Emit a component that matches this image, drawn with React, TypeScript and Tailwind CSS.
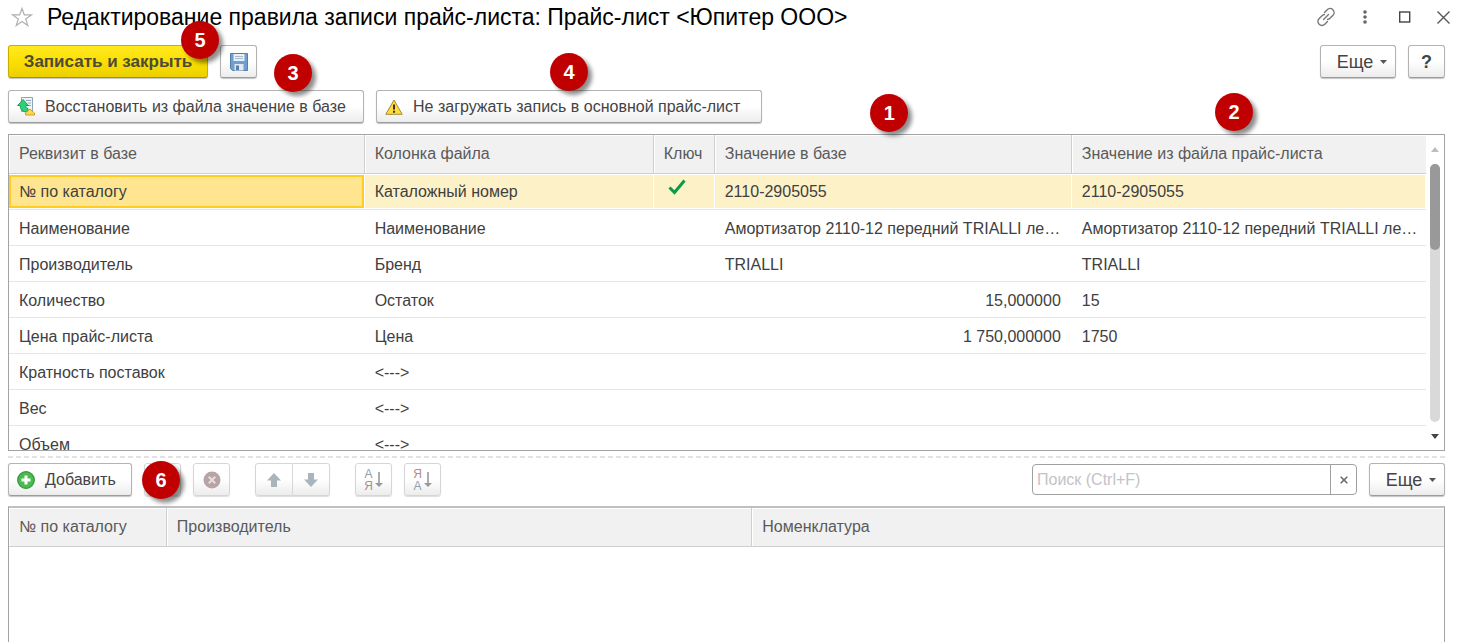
import { useState } from "react"
import type { ReactNode } from "react"

interface Rule {
  name: string
  column: string
  isKey?: boolean
  base?: string
  numeric?: boolean
  file?: string
}

const RULES: Rule[] = [
  { name: "№ по каталогу", column: "Каталожный номер", isKey: true, base: "2110-2905055", file: "2110-2905055" },
  { name: "Наименование", column: "Наименование", base: "Амортизатор 2110-12 передний TRIALLI ле…", file: "Амортизатор 2110-12 передний TRIALLI ле…" },
  { name: "Производитель", column: "Бренд", base: "TRIALLI", file: "TRIALLI" },
  { name: "Количество", column: "Остаток", base: "15,000000", numeric: true, file: "15" },
  { name: "Цена прайс-листа", column: "Цена", base: "1 750,000000", numeric: true, file: "1750" },
  { name: "Кратность поставок", column: "<--->" },
  { name: "Вес", column: "<--->" },
  { name: "Объем", column: "<--->" },
]

const BTN = "flex shrink-0 items-center h-[33px] border rounded-[3px] bg-linear-to-b from-white from-50% to-[#ececec] whitespace-nowrap"
const BTN_ON = BTN + " border-[#b3b3b3] border-b-[#9c9c9c] shadow-[0_1px_1px_#c4c4c4] text-[#444]"
const BTN_OFF = BTN + " justify-center border-[#d6d6d6] shadow-[0_1px_1px_#dedede]"
const TH = "h-[39px] p-0 px-[10px] text-left font-normal text-[#5a5a5a] border-r border-b border-[#cfcfcf] last:border-r-0 shadow-[inset_1px_1px_0_#fff]"

export default function App() {
  const [search, setSearch] = useState("")
  const [selected, setSelected] = useState(0)

  return (
    <div className="flex flex-col h-screen overflow-hidden bg-white pl-2 pr-[18px] text-base leading-5 text-[#404040] font-['Liberation_Sans',Arial,sans-serif]">
      <header className="flex items-center h-[34px] shrink-0">
        <button aria-label="В избранное" className="mr-[14px] ml-[3px]">
          <StarIcon />
        </button>
        <h1 className="flex-1 text-[23px] leading-[34px] text-black whitespace-nowrap">
          Редактирование правила записи прайс-листа: Прайс-лист &lt;Юпитер ООО&gt;
        </h1>
        <div className="flex items-center -mr-[6px] text-[#666]">
          <button aria-label="Ссылка" className="mr-5"><LinkIcon /></button>
          <button aria-label="Меню" className="mr-6">
            <svg width="18" height="18" viewBox="0 0 18 18" fill="currentColor">
              <circle cx="9" cy="4" r="1.8" /><circle cx="9" cy="9" r="1.8" /><circle cx="9" cy="14" r="1.8" />
            </svg>
          </button>
          <button aria-label="Развернуть" className="mr-6">
            <svg width="14" height="14" viewBox="0 0 14 14" fill="none" stroke="#444" strokeWidth="1.4">
              <rect x="1.7" y="2" width="10" height="10" />
            </svg>
          </button>
          <button aria-label="Закрыть">
            <svg width="15" height="15" viewBox="0 0 15 15" fill="none" stroke="#555" strokeWidth="1.4">
              <path d="M1.5 1.5l12 12M13.5 1.5l-12 12" />
            </svg>
          </button>
        </div>
      </header>

      <div className="flex items-start shrink-0 mt-[11px] gap-3">
        <div className="relative">
          <button className="h-[33px] w-[200px] rounded-[3px] border border-[#c9ae00] border-b-[#a89200] bg-linear-to-b from-[#ffe91f] via-[#fbdf00] to-[#ecd000] font-bold text-[17px] text-[#4d4a3a] shadow-[0_1px_1px_#c4c4c4] whitespace-nowrap">
            Записать и закрыть
          </button>
          <Badge n={5} className="-top-6 -right-[11px]" />
        </div>
        <button aria-label="Записать" className={BTN_ON + " w-[37px] justify-center"}><SaveIcon /></button>
        <div className="flex-1" />
        <button className={BTN_ON + " w-[76px] justify-center gap-[7px] pl-2 text-lg"}>Еще <Caret /></button>
        <button aria-label="Справка" className={BTN_ON + " w-[37px] justify-center font-bold text-lg text-[#333]"}>?</button>
      </div>

      <div className="flex shrink-0 mt-3 gap-3">
        <div className="relative">
          <button className={BTN_ON + " w-[356px] pl-2 gap-[10px]"}>
            <RestoreIcon />
            <span>Восстановить из файла значение в базе</span>
          </button>
          <Badge n={3} className="-top-9 right-[52px]" />
        </div>
        <div className="relative">
          <button className={BTN_ON + " w-[386px] pl-2 gap-[10px]"}>
            <WarningIcon />
            <span>Не загружать запись в основной прайс-лист</span>
          </button>
          <Badge n={4} className="-top-[37px] left-[174px]" />
        </div>
      </div>

      <div className="relative shrink-0 mt-[11px]">
        <div className="flex h-[317px] border border-[#a3a3a3] overflow-hidden">
          <div className="flex-1 min-w-0">
            <table className="w-full table-fixed border-separate border-spacing-0">
              <colgroup>
                <col className="w-[25.1%]" />
                <col className="w-[20.4%]" />
                <col className="w-[61px]" />
                <col className="w-[25.2%]" />
                <col />
              </colgroup>
              <thead className="bg-[#f1f1f1]">
                <tr>
                  <th className={TH}>Реквизит в базе</th>
                  <th className={TH}>Колонка файла</th>
                  <th className={TH}>Ключ</th>
                  <th className={TH}>Значение в базе</th>
                  <th className={TH}>Значение из файла прайс-листа</th>
                </tr>
              </thead>
              <tbody>
                {RULES.map((r, i) => {
                  const on = i === selected
                  return (
                    <tr key={r.name} onClick={() => setSelected(i)}>
                      <Cell on={on} focus={on}>{r.name}</Cell>
                      <Cell on={on}>{r.column}</Cell>
                      <Cell on={on}>
                        {r.isKey && (
                          <svg className="mt-1 ml-1" width="18" height="16" viewBox="0 0 18 16" fill="none" stroke="#0a9a4a" strokeWidth="3">
                            <path d="M1.5 8.5l5 5L16.5 1.5" />
                          </svg>
                        )}
                      </Cell>
                      <Cell on={on} right={r.numeric}>{r.base}</Cell>
                      <Cell on={on}>{r.file}</Cell>
                    </tr>
                  )
                })}
              </tbody>
            </table>
          </div>
          <div className="flex flex-col items-center w-[18px] pt-3 pb-[11px]">
            <svg width="8" height="5" viewBox="0 0 8 5" fill="#bdbdbd"><path d="M0 5l4-5 4 5z" /></svg>
            <div className="flex-1 w-[10px] my-3 rounded-full bg-[#d9d9d9]">
              <div className="h-1/3 rounded-full bg-[#999]" />
            </div>
            <svg width="8" height="5" viewBox="0 0 8 5" fill="#444"><path d="M0 0l4 5 4-5z" /></svg>
          </div>
        </div>
        <Badge n={1} className="-top-10 left-[60%]" />
        <Badge n={2} className="-top-[41px] left-[84%]" />
      </div>

      <div className="shrink-0 h-[2px] mt-[5px] bg-[repeating-linear-gradient(90deg,#e2e2e2_0_5px,transparent_5px_8px)]" />

      <div className="flex shrink-0 mt-[5px]">
        <button className={BTN_ON + " w-[124px] pl-2 gap-[10px]"}>
          <svg width="18" height="18" viewBox="0 0 18 18">
            <circle cx="9" cy="9" r="8.3" fill="#4cba50" stroke="#2c9638" strokeWidth="1.2" />
            <path d="M9 4.5v9M4.5 9h9" stroke="#fff" strokeWidth="3" />
          </svg>
          <span>Добавить</span>
        </button>
        <div className="relative ml-3">
          <button aria-label="Изменить" disabled className={BTN_OFF + " w-[37px]"} />
          <Badge n={6} className="-top-[2px] -left-[2px]" />
        </div>
        <button aria-label="Удалить" disabled className={BTN_OFF + " w-[37px] ml-3"}>
          <svg width="18" height="18" viewBox="0 0 18 18">
            <circle cx="9" cy="9" r="8.5" fill="#b8a4a4" />
            <path d="M5.8 5.8l6.4 6.4M12.2 5.8l-6.4 6.4" stroke="#e8e0e0" strokeWidth="2" />
          </svg>
        </button>
        <div className="flex ml-[25px]">
          <button aria-label="Вверх" disabled className={BTN_OFF + " w-[38px] rounded-r-none"}><ArrowIcon /></button>
          <button aria-label="Вниз" disabled className={BTN_OFF + " w-[37px] rounded-l-none border-l-0"}><ArrowIcon down /></button>
        </div>
        <button aria-label="По возрастанию" disabled className={BTN_OFF + " w-[37px] ml-[25px]"}><SortIcon top="А" bottom="Я" /></button>
        <button aria-label="По убыванию" disabled className={BTN_OFF + " w-[37px] ml-3"}><SortIcon top="Я" bottom="А" /></button>
        <div className="flex-1" />
        <div className="flex w-[325px] h-[31px] mt-px border border-[#a0a0a0] rounded">
          <input
            aria-label="Поиск"
            value={search}
            onChange={(e) => setSearch(e.target.value)}
            placeholder="Поиск (Ctrl+F)"
            className="flex-1 min-w-0 pl-1 outline-none placeholder:text-[#c3c3c7]"
          />
          <button aria-label="Очистить" onClick={() => setSearch("")} className="flex items-center justify-center w-[26px] border-l border-[#a0a0a0]">
            <svg width="8" height="8" viewBox="0 0 8 8" stroke="#666" strokeWidth="1.5"><path d="M.7 .7l6.6 6.6M7.3 .7L.7 7.3" /></svg>
          </button>
        </div>
        <button className={BTN_ON + " w-[76px] ml-3 justify-center gap-[7px] pl-2 text-lg"}>Еще <Caret /></button>
      </div>

      <div className="flex-1 mt-[10px] border border-b-0 border-t-2 border-[#a3a3a3] border-t-[#c0c0c0]">
        <table className="w-full table-fixed border-separate border-spacing-0">
          <colgroup>
            <col className="w-[11%]" />
            <col className="w-[40.8%]" />
            <col />
          </colgroup>
          <thead className="bg-[#f1f1f1]">
            <tr>
              <th className={TH}>№ по каталогу</th>
              <th className={TH}>Производитель</th>
              <th className={TH}>Номенклатура</th>
            </tr>
          </thead>
        </table>
      </div>
    </div>
  )
}

function Cell(props: { on: boolean; focus?: boolean; right?: boolean; children?: ReactNode }) {
  let cls = "pl-[10px] leading-[33px] whitespace-nowrap overflow-hidden mr-px"
  cls += props.on ? " h-[33px] my-px" : " h-[35px] pt-[2px]"
  cls += props.right ? " pr-[10px] text-right" : " pr-1"
  if (props.focus) cls += " bg-[#ffe590] shadow-[inset_0_0_0_2px_#ffcc1f]"
  else if (props.on) cls += " bg-[#fdf1c8]"
  return (
    <td className="p-0 border-b border-[#e6e6e6]">
      <div className={cls}>{props.children}</div>
    </td>
  )
}

function Badge({ n, className }: { n: number; className: string }) {
  return (
    <span className={"absolute z-10 flex items-center justify-center size-[38px] rounded-full bg-[#c00000] text-white text-xl font-bold shadow-[4px_4px_4px_rgba(0,0,0,0.45)] pointer-events-none " + className}>
      {n}
    </span>
  )
}

function Caret() {
  return <svg width="7" height="4" viewBox="0 0 7 4" fill="#555"><path d="M0 0h7L3.5 4z" /></svg>
}

function StarIcon() {
  return (
    <svg width="22" height="20" viewBox="0 0 22 20" fill="none" stroke="#b0b0b0" strokeWidth="1.2">
      <path d="M11 1.5l2.3 6.3 7 .1-5.6 4 2.1 6.6L11 14.500l-5.800 4 2.100-6.600-5.600-4 7-.1z" />
    </svg>
  )
}

function LinkIcon() {
  return (
    <svg width="20" height="20" viewBox="0 0 20 20" fill="none" stroke="#777" strokeWidth="1.4" strokeLinecap="round">
      <path d="M8.5 5.5l2.700-2.700a3.900 3.900 0 0 1 5.800 5.500l-3 3a3.900 3.900 0 0 1-2.500 1.200" />
      <path d="M11.500 14.500l-2.700 2.700a3.900 3.900 0 0 1-5.800-5.500l3-3a3.900 3.900 0 0 1 2.500-1.200" />
      <path d="M7.500 12.500l5-5" />
    </svg>
  )
}

function SaveIcon() {
  return (
    <svg width="18" height="18" viewBox="0 0 18 18">
      <path d="M.5.5h17v17h-15l-2-2z" fill="#6f9fd0" stroke="#5580ad" />
      <rect x="3.5" y="1" width="11" height="7" fill="#e9f0f6" />
      <path d="M5 3.5h8M5 5.5h8" stroke="#a9bccd" />
      <rect x="4.5" y="11" width="9" height="6.5" fill="#e3e8ec" />
      <rect x="6" y="12.5" width="3" height="4.5" fill="#5580ad" />
    </svg>
  )
}

function RestoreIcon() {
  return (
    <svg width="18" height="19" viewBox="0 0 18 19">
      <path d="M4.5.5h11v14h-11z" fill="#f1f5f8" stroke="#8fa5b8" />
      <path d="M9 3.5h5M11 6h3M11 8.5h3" stroke="#8fa5b8" />
      <path d="M6 2.5L.6 8.5h2.600c0 4.500 2.800 6.800 7.800 6.500v-3.500C9.300 11 8.800 10 8.800 8.500h2.700z" fill="#2fd07a" stroke="#159650" strokeWidth=".9" />
      <path d="M13 12l4.500 4v2h-9v-2z" fill="#ffd84a" stroke="#c79a1c" strokeWidth=".9" />
    </svg>
  )
}

function WarningIcon() {
  return (
    <svg width="18" height="16" viewBox="0 0 18 16">
      <path d="M9 1l8.2 14.3H.8z" fill="#ffdc36" stroke="#a08a3c" strokeLinejoin="round" />
      <path d="M9 5.5v5M9 11.8v2" stroke="#333" strokeWidth="2" />
    </svg>
  )
}

function ArrowIcon({ down }: { down?: boolean }) {
  return (
    <svg className={down ? "rotate-180" : ""} width="16" height="14" viewBox="0 0 16 14" fill="#a9b5bd">
      <path d="M8 0l7 7.5h-4V14H5V7.5H1z" />
    </svg>
  )
}

function SortIcon({ top, bottom }: { top: string; bottom: string }) {
  return (
    <span className="flex items-center gap-[2px] text-xs leading-3">
      <span className="flex flex-col">
        <span className={top === "А" ? "text-[#8fa0ab]" : "text-[#b08c8c]"}>{top}</span>
        <span className={bottom === "А" ? "text-[#8fa0ab]" : "text-[#b08c8c]"}>{bottom}</span>
      </span>
      <svg width="8" height="16" viewBox="0 0 8 16" fill="#999"><path d="M3.2 0h1.600v11H8l-4 4-4-4h3.200z" /></svg>
    </span>
  )
}
